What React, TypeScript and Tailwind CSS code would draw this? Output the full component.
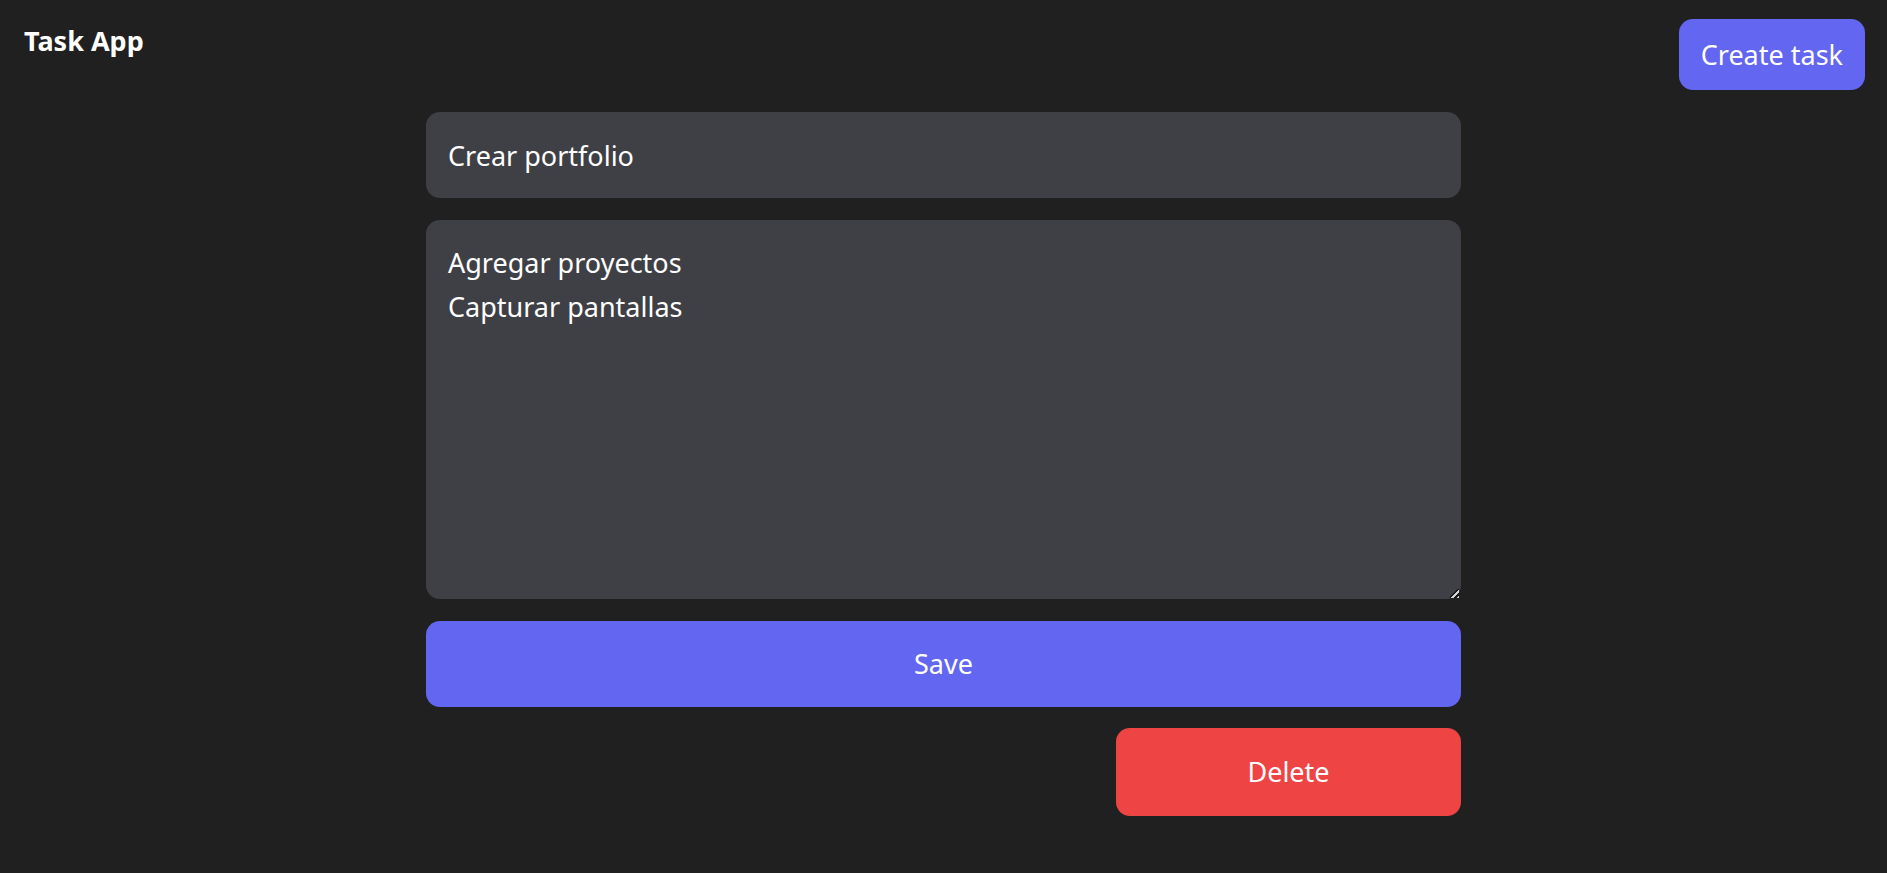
import React, { useState } from "react";

export default function App() {
  const [title, setTitle] = useState("Crear portfolio");
  const [description, setDescription] = useState("Agregar proyectos\nCapturar pantallas");

  return (
    <div className="min-h-screen bg-[#202020] px-[22px] font-['Noto_Sans',sans-serif] text-[27px] leading-[44px] text-white">
      <header className="flex items-start justify-between pt-[19px]">
        <a href="#tasks" className="pl-0.5">
          <h1 className="font-bold">Task App</h1>
        </a>
        <button type="button" className="h-[71px] rounded-[14px] bg-[#6366f1] px-[22px]">
          Create task
        </button>
      </header>
      <main className="mx-auto mt-[22px] max-w-[1035px]">
        <form className="flex flex-col gap-[22px]" onSubmit={(e) => e.preventDefault()}>
          <input
            type="text"
            aria-label="Title"
            value={title}
            onChange={(e) => setTitle(e.target.value)}
            className="h-[86px] w-full rounded-[14px] bg-[#3f4045] px-[22px]"
          />
          <textarea
            aria-label="Description"
            value={description}
            onChange={(e) => setDescription(e.target.value)}
            className="h-[379px] w-full rounded-[14px] bg-[#3f4045] px-[22px] py-[21px] [&::-webkit-resizer]:bg-[linear-gradient(135deg,transparent_44%,#18181b_44%,#18181b_54%,#d4d4d8_54%,#d4d4d8_68%,#18181b_68%,#18181b_86%,#d4d4d8_86%)] [&::-webkit-resizer]:bg-[length:9px_9px] [&::-webkit-resizer]:bg-[position:right_2px_bottom_1px] [&::-webkit-resizer]:bg-no-repeat"
          />
          <button type="submit" className="h-[86px] w-full rounded-[14px] bg-[#6366f1]">
            Save
          </button>
        </form>
        <div className="mt-[21px] flex justify-end">
          <button type="button" className="h-[88px] w-1/3 rounded-[14px] bg-[#ef4444]">
            Delete
          </button>
        </div>
      </main>
    </div>
  );
}
